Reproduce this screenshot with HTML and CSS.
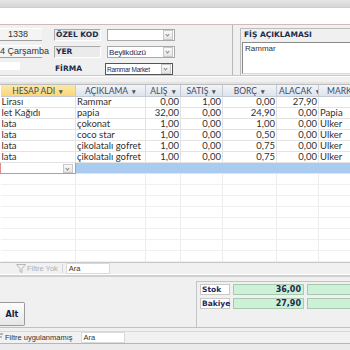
FILE: index.html
```html
<!DOCTYPE html>
<html><head><meta charset="utf-8">
<title>Fiş</title>
<link rel="stylesheet" href="styles.css">
</head>
<body>
  <div class="topbar"></div>
  <div class="whiteband"></div>
  <div class="formhead">
    <div class="leftcol">
      <div class="fld num">1338</div>
      <div class="fld day">4 Çarşamba</div>
      <div class="smallbox"></div>
    </div>
    <div class="midpanel">
      <div class="frow">
        <div class="lbl boxed">ÖZEL KOD</div>
        <div class="combo"><span></span><i class="dd"></i></div>
      </div>
      <div class="frow">
        <div class="lbl boxed">YER</div>
        <div class="combo"><span>Beylikdüzü</span><i class="dd"></i></div>
      </div>
      <div class="frow">
        <div class="lbl">FİRMA</div>
        <div class="combo dark"><span class="small">Rammar Market</span><i class="dd"></i></div>
      </div>
    </div>
    <div class="notes">
      <div class="notes-lbl">FİŞ AÇIKLAMASI</div>
      <div class="notes-box">Rammar</div>
    </div>
  </div>
  <div class="gap"></div>
  <div class="grid">
    <table>
      <colgroup>
        <col style="width:75px"><col style="width:70px"><col style="width:35px"><col style="width:42px"><col style="width:54px"><col style="width:42px"><col style="width:40px">
      </colgroup>
      <thead>
        <tr>
          <th class="sel">HESAP ADI <b>▾</b></th>
          <th>AÇIKLAMA <b>▾</b></th>
          <th>ALIŞ <b>▾</b></th>
          <th>SATIŞ <b>▾</b></th>
          <th>BORÇ <b>▾</b></th>
          <th>ALACAK <b>▾</b></th>
          <th class="lastcol">MARKA</th>
        </tr>
      </thead>
      <tbody>
        <tr><td>Lirası</td><td>Rammar</td><td class="n">0,00</td><td class="n">1,00</td><td class="n">0,00</td><td class="n">27,90</td><td></td></tr>
        <tr><td>let Kağıdı</td><td>papia</td><td class="n">32,00</td><td class="n">0,00</td><td class="n">24,90</td><td class="n">0,00</td><td>Papia</td></tr>
        <tr><td>lata</td><td>çokonat</td><td class="n">1,00</td><td class="n">0,00</td><td class="n">1,00</td><td class="n">0,00</td><td>Ülker</td></tr>
        <tr><td>lata</td><td>coco star</td><td class="n">1,00</td><td class="n">0,00</td><td class="n">0,50</td><td class="n">0,00</td><td>Ülker</td></tr>
        <tr><td>lata</td><td>çikolatalı gofret</td><td class="n">1,00</td><td class="n">0,00</td><td class="n">0,75</td><td class="n">0,00</td><td>Ülker</td></tr>
        <tr><td>lata</td><td>çikolatalı gofret</td><td class="n">1,00</td><td class="n">0,00</td><td class="n">0,75</td><td class="n">0,00</td><td>Ülker</td></tr>
        <tr class="newrow"><td class="edit"><i class="dd"></i></td><td></td><td></td><td></td><td></td><td></td><td></td></tr>
        <tr class="empty"><td></td><td></td><td></td><td></td><td></td><td></td><td></td></tr>
        <tr class="empty"><td></td><td></td><td></td><td></td><td></td><td></td><td></td></tr>
        <tr class="empty"><td></td><td></td><td></td><td></td><td></td><td></td><td></td></tr>
        <tr class="empty"><td></td><td></td><td></td><td></td><td></td><td></td><td></td></tr>
        <tr class="empty"><td></td><td></td><td></td><td></td><td></td><td></td><td></td></tr>
        <tr class="empty"><td></td><td></td><td></td><td></td><td></td><td></td><td></td></tr>
        <tr class="empty"><td></td><td></td><td></td><td></td><td></td><td></td><td></td></tr>
        <tr class="empty last"><td></td><td></td><td></td><td></td><td></td><td></td><td></td></tr>
      </tbody>
    </table>
    <div class="navbar inner">
      <span class="filt off"><svg width="10" height="9" viewBox="0 0 10 9"><path d="M0.5 0.5h9l-3.5 4v4l-2-1v-3z" fill="none" stroke="#b8b8b8"/></svg>Filtre Yok</span>
      <span class="search">Ara</span>
    </div>
  </div>
  <div class="footer">
    <div class="btncol">
      <div class="btn">Alt</div>
    </div>
    <div class="totals">
      <div class="trow"><div class="tlbl">Stok</div><div class="tval">36,00</div><div class="tval2"></div></div>
      <div class="trow"><div class="tlbl">Bakiye</div><div class="tval">27,90</div><div class="tval2"></div></div>
    </div>
  </div>
  <div class="navbar outer">
    <span class="filt"><svg width="4" height="9" viewBox="0 0 4 9"><path d="M0 1h3M0 4h2" stroke="#7a7a7a"/></svg>Filtre uygulanmamış</span>
    <span class="search">Ara</span>
  </div>
  <div class="bottomedge"></div>
</body></html>
```

FILE: styles.css
```css
body {
  margin: 0;
  padding: 0;
  width: 350px;
  height: 350px;
  overflow: hidden;
  background: #f0f0f0;
  font-family: "DejaVu Sans", Verdana, sans-serif;
  font-size: 8px;
  color: #222;
}
.topbar {
  height: 7px;
  background: linear-gradient(#e6e6e6, #d6d6d6);
  border-bottom: 1px solid #cfcfcf;
}
.whiteband {
  height: 16px;
  background: #fff;
  border-bottom: 1px solid #d2b8b8;
}
.formhead {
  height: 50px;
  display: flex;
  background: #f0f0f0;
  border-bottom: 1px solid #c8c8c8;
}
.leftcol {
  width: 42px;
  padding-top: 3px;
}
.fld {
  height: 11px;
  border-bottom: 1px solid #a0a0a0;
  border-top: 1px solid #fff;
  background: #f4f4f4;
  font-family: "Liberation Sans", Arial, sans-serif;
  font-size: 9px;
  line-height: 11px;
  color: #333;
  white-space: nowrap;
}
.num { text-align: right; padding-right: 14px; }
.day { margin-top: 4px; }
.smallbox {
  margin-top: 4px;
  width: 20px;
  height: 8px;
  background: #fff;
}
.midpanel {
  width: 178px;
  margin-left: 12px;
  padding-top: 4px;
  display: flex;
  flex-direction: column;
  gap: 5px;
  border-right: 1px solid #b8b8b8;
}
.frow {
  display: flex;
  align-items: center;
  gap: 6px;
}
.lbl {
  width: 44px;
  height: 10px;
  padding-left: 1px;
  font-family: "DejaVu Sans", Verdana, sans-serif;
  font-weight: bold;
  font-size: 7.5px;
  line-height: 10px;
  color: #1c2a4a;
  white-space: nowrap;
}
.boxed {
  border: 1px solid #a9a9a9;
  border-right-color: #fff;
  border-bottom-color: #fff;
  background: #ebebeb;
}
.combo {
  width: 66px;
  height: 10px;
  border: 1px solid #a8a8a8;
  background: #fff;
  display: flex;
  align-items: center;
  justify-content: space-between;
  font-family: "Liberation Sans", Arial, sans-serif;
  font-size: 8px;
  color: #1a2a5a;
  overflow: hidden;
}
.combo span { padding-left: 1px; white-space: nowrap; letter-spacing: -0.2px; }
.combo span.small { font-size: 6.5px; letter-spacing: -0.3px; }
.combo.dark { border-color: #555; height: 10px; }
.dd {
  width: 8px;
  height: 8px;
  margin-right: 1px;
  border: 1px solid #c8c8c8;
  background: linear-gradient(#fafafa, #e4e4e4);
  position: relative;
  flex: none;
}
.dd::after {
  content: "";
  position: absolute;
  left: 2px;
  top: 2px;
  width: 2px;
  height: 2px;
  border-right: 1px solid #888;
  border-bottom: 1px solid #888;
  transform: rotate(45deg);
}
.notes {
  margin-left: 7px;
  margin-top: 3px;
  flex: 1;
  border-top: 1px solid #bcbcbc;
  border-left: 1px solid #bcbcbc;
}
.notes-lbl {
  height: 11px;
  padding-left: 3px;
  font-weight: bold;
  font-size: 7.5px;
  line-height: 12px;
  color: #1c2a4a;
}
.notes-box {
  height: 28px;
  margin-top: 2px;
  margin-left: 1px;
  background: #fff;
  border: 1px solid #8a8a8a;
  border-right: none;
  border-bottom-color: #d8d8d8;
  font-family: "Liberation Sans", Arial, sans-serif;
  font-size: 8px;
  padding: 1px 2px;
  color: #333;
}
.gap {
  height: 7px;
  border-top: 1px solid #fff;
  border-bottom: 1px solid #bdbdbd;
  box-shadow: inset 0 -2px 0 #e2e2e2;
}
.grid {
  background: #fff;
  height: 187px;
  display: flex;
  flex-direction: column;
  justify-content: space-between;
  border-bottom: 1px solid #bdbdbd;
}
table {
  border-collapse: collapse;
  table-layout: fixed;
  width: 358px;
  font-family: Lato, "Open Sans", sans-serif;
  font-size: 9.5px;
}
th {
  height: 11px;
  padding: 0 2px;
  font-weight: normal;
  font-size: 8.5px;
  color: #3b4a66;
  background: linear-gradient(#f2f4f7, #dde3ec);
  border-right: 1px solid #c4cbd6;
  border-bottom: 1px solid #c4cbd6;
  text-align: center;
  white-space: nowrap;
  overflow: hidden;
}
th b { font-weight: bold; font-size: 7px; margin-left: 2px; color: #555; }
th.lastcol { text-align: left; padding-left: 8px; }
th.sel { background: linear-gradient(#fde9a6, #f8d676); }
td {
  height: 10px;
  padding: 0 1px;
  line-height: 10px;
  border-right: 1px solid #e3e3e3;
  border-bottom: 1px solid #e3e3e3;
  color: #303030;
  white-space: nowrap;
  overflow: hidden;
}
td.n { text-align: right; }
.newrow td { background: #a9cbf0; border-right-color: #a9cbf0; }
.newrow td.edit {
  background: #fff;
  border: 1px solid #e08a8a;
  text-align: right;
}
.newrow td.edit .dd { display: inline-block; vertical-align: middle; height: 7px; }
.empty td { border-bottom-color: #f0f0f0; border-right-color: #ececec; }
.navbar {
  height: 11px;
  display: flex;
  align-items: center;
  background: #f1f1f1;
  border-top: 1px solid #c8c8c8;
  font-family: "Liberation Sans", Arial, sans-serif;
  font-size: 7.5px;
  color: #333;
}
.filt { display: flex; align-items: center; gap: 1px; white-space: nowrap; }
.inner .filt { margin-left: 16px; color: #b0b0b0; padding-right: 4px; border-right: 1px solid #d6d6d6; }
.search {
  height: 9px;
  line-height: 9px;
  width: 40px;
  padding-left: 2px;
  margin-left: 3px;
  background: #fff;
  border: 1px solid #dadada;
}
.footer {
  height: 52px;
  display: flex;
  justify-content: space-between;
  border-top: 2px solid #fff;
  border-bottom: 1px solid #c0c0c0;
  box-shadow: inset 0 2px 0 #d0d0d0;
}
.btncol { display: flex; align-items: flex-end; padding-bottom: 1px; }
.btn {
  width: 24px;
  height: 22px;
  border: 1px solid #9a9a9a;
  border-left: none;
  border-radius: 0 2px 2px 0;
  background: linear-gradient(#fdfdfd, #e6e6e6);
  font-family: "DejaVu Sans", Verdana, sans-serif;
  font-weight: bold;
  font-size: 8px;
  color: #10204a;
  display: flex;
  align-items: center;
  justify-content: center;
}
.totals {
  width: 150px;
  margin-top: 6px;
  padding: 2px 0 0 3px;
  border-left: 1px solid #c4c4c4;
  border-top: 1px solid #c4c4c4;
  display: flex;
  flex-direction: column;
  gap: 3px;
}
.trow { display: flex; gap: 3px; height: 11px; }
.tlbl {
  width: 27px;
  background: #fff;
  border: 1px solid #c9c9c9;
  font-weight: bold;
  font-size: 7.5px;
  line-height: 10px;
  padding-left: 1px;
  color: #1c2a5a;
}
.tval, .tval2 {
  background: #cdf1d6;
  border: 1px solid #a8c8b0;
  font-weight: bold;
  font-size: 8px;
  line-height: 10px;
  color: #202a4a;
  text-align: right;
}
.tval { width: 67px; padding-right: 2px; }
.tval2 { flex: 1; border-right: none; }
.outer {
  margin-top: 3px;
  border-top: 1px solid #d8d8d8;
}
.outer .search { margin-left: 8px; }
.bottomedge {
  height: 6px;
  border-top: 1px solid #d2aaaa;
  background: #ebebeb;
}
```
